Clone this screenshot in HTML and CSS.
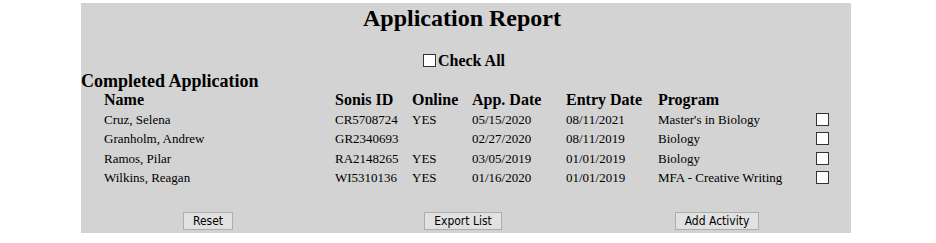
FILE: index.html
```html
<!DOCTYPE html>
<html lang="en">
<head>
  <meta charset="UTF-8" />
  <title>Application Report</title>
  <link rel="stylesheet" href="styles.css">
</head>
<body>
  <div class="panel">
    <h2 class="title">Application Report</h2>

    <div class="check-all">
      <label><input type="checkbox" id="checkAll" onclick="toggleAll(this)">Check All</label>
    </div>

    <h3 class="section-title">Completed Application</h3>

    <div class="grid head">
      <div>Name</div>
      <div>Sonis ID</div>
      <div>Online</div>
      <div>App. Date</div>
      <div>Entry Date</div>
      <div>Program</div>
      <div></div>
    </div>

    <div class="grid row">
      <div>Cruz, Selena</div>
      <div>CR5708724</div>
      <div>YES</div>
      <div>05/15/2020</div>
      <div>08/11/2021</div>
      <div>Master's in Biology</div>
      <div><input type="checkbox" class="pick"></div>
    </div>
    <div class="grid row">
      <div>Granholm, Andrew</div>
      <div>GR2340693</div>
      <div></div>
      <div>02/27/2020</div>
      <div>08/11/2019</div>
      <div>Biology</div>
      <div><input type="checkbox" class="pick"></div>
    </div>
    <div class="grid row">
      <div>Ramos, Pilar</div>
      <div>RA2148265</div>
      <div>YES</div>
      <div>03/05/2019</div>
      <div>01/01/2019</div>
      <div>Biology</div>
      <div><input type="checkbox" class="pick"></div>
    </div>
    <div class="grid row">
      <div>Wilkins, Reagan</div>
      <div>WI5310136</div>
      <div>YES</div>
      <div>01/16/2020</div>
      <div>01/01/2019</div>
      <div>MFA - Creative Writing</div>
      <div><input type="checkbox" class="pick"></div>
    </div>

    <div class="actions">
      <div class="cell"><button type="button">Reset</button></div>
      <div class="cell"><button type="button">Export List</button></div>
      <div class="cell"><button type="button">Add Activity</button></div>
    </div>
  </div>

  <script>
    function toggleAll(box) {
      document.querySelectorAll('.pick').forEach(el => el.checked = box.checked);
    }
  </script>
</body>
</html>
```

FILE: styles.css
```css
body { margin: 0; font-family: "Liberation Serif", "Times New Roman", serif; color: #000; }
.panel {
  width: 770px; margin: 3px 0 0 81px;
  background: #d3d3d3;
  padding-bottom: 3px;
}
.title {
  margin: 0; padding: 1px 8px 0 0;
  font-size: 24px; text-align: center; line-height: 28px;
}
.check-all {
  text-align: center; margin-top: 20px;
  font-size: 16px; font-weight: bold; line-height: 18px;
  padding-right: 4px;
}
input[type="checkbox"] {
  appearance: none; -webkit-appearance: none;
  width: 13px; height: 13px; box-sizing: border-box;
  border: 1px solid #333; background: #fff; border-radius: 0;
}
input[type="checkbox"]:checked::after {
  content: "\2713"; display: block; font: 11px/11px "DejaVu Sans", sans-serif; text-align: center;
}
.check-all input { margin: 0 2px 0 0; vertical-align: -1px; }
.section-title {
  margin: 1px 0 0 0;
  font-size: 18px; line-height: 20px;
}
.grid {
  display: grid;
  grid-template-columns: 231px 77px 60px 94px 92px 155px 1fr;
  padding-left: 23px;
}
.head { font-size: 16px; font-weight: bold; line-height: 18px; margin-bottom: 1px; }
.row { font-size: 13px; line-height: 19.4px; }
.row input { margin: 3px 0 0 3px; vertical-align: top; }
.actions {
  display: grid;
  grid-template-columns: 254px 256px 252px;
  margin-top: 23px;
}
.cell { text-align: center; }
button {
  font-family: "DejaVu Sans Condensed", "DejaVu Sans", sans-serif;
  font-size: 12px;
  background: #e1e1e1; border: 1px solid #adadad;
  padding: 1px 9px; height: 18px; line-height: 14px;
  cursor: pointer;
}
button:hover { background: #e5f1fb; border-color: #0078d7; }
```
